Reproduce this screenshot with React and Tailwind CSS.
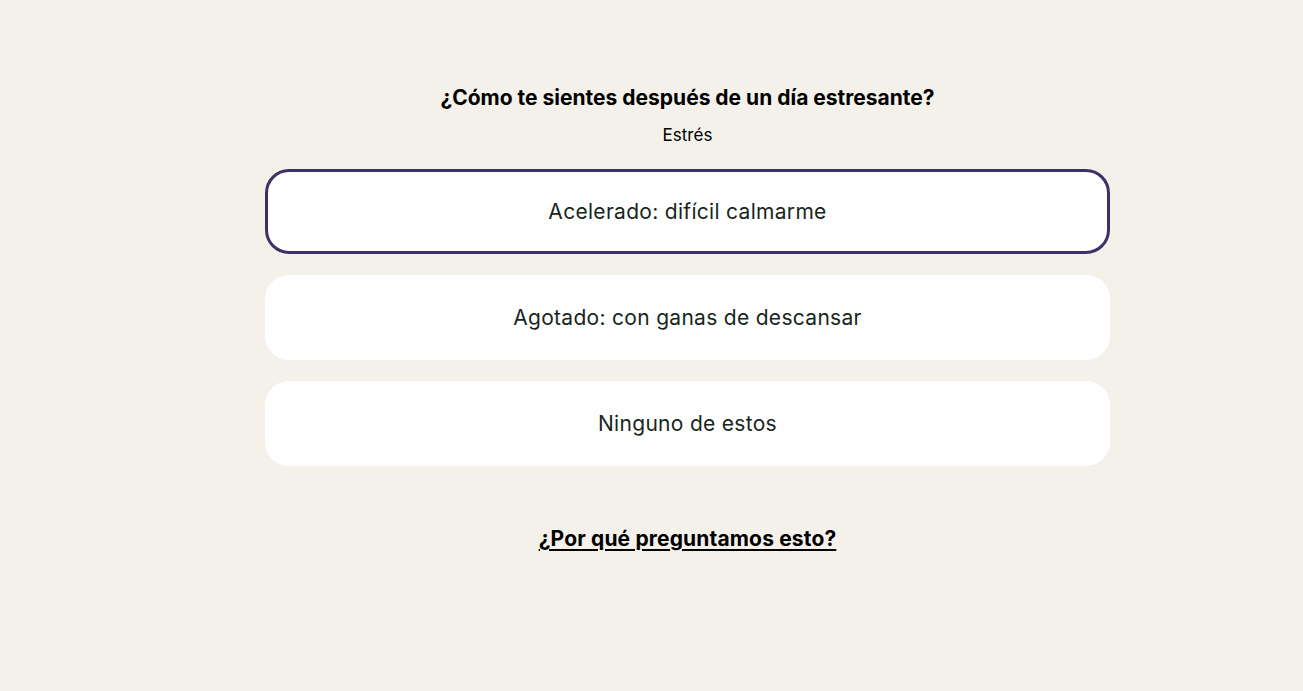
import React, { useState } from "react";

const options = [
  "Acelerado: difícil calmarme",
  "Agotado: con ganas de descansar",
  "Ninguno de estos",
];

export default function App() {
  const [selected, setSelected] = useState(0);

  return (
    <div
      className="min-h-[691px] w-full bg-[#f4f1ea] pl-[72px]"
      style={{ fontFamily: "Inter, 'Open Sans', sans-serif" }}
    >
      <div className="mx-auto flex w-[845px] flex-col items-center pt-[84px]">
        <h2 className="text-[21px] font-bold leading-[28px] text-black">
          ¿Cómo te sientes después de un día estresante?
        </h2>
        <p className="mt-[11px] text-[17px] leading-[24px] text-black">Estrés</p>

        <div className="mt-[22px] flex w-full flex-col gap-[21px]">
          {options.map((opt, i) => (
            <button
              key={opt}
              onClick={() => setSelected(i)}
              className={
                "flex h-[85px] w-full items-center justify-center rounded-[24px] bg-white text-[21px] tracking-[0.3px] text-[#17261c] " +
                (selected === i
                  ? "border-[3px] border-[#3d3268]"
                  : "border-[3px] border-white")
              }
            >
              {opt}
            </button>
          ))}
        </div>

        <a
          href="#"
          className="mt-[59px] text-[21px] font-bold leading-[28px] tracking-[0.15px] text-black underline decoration-2 underline-offset-[3px]"
        >
          ¿Por qué preguntamos esto?
        </a>
      </div>
    </div>
  );
}
